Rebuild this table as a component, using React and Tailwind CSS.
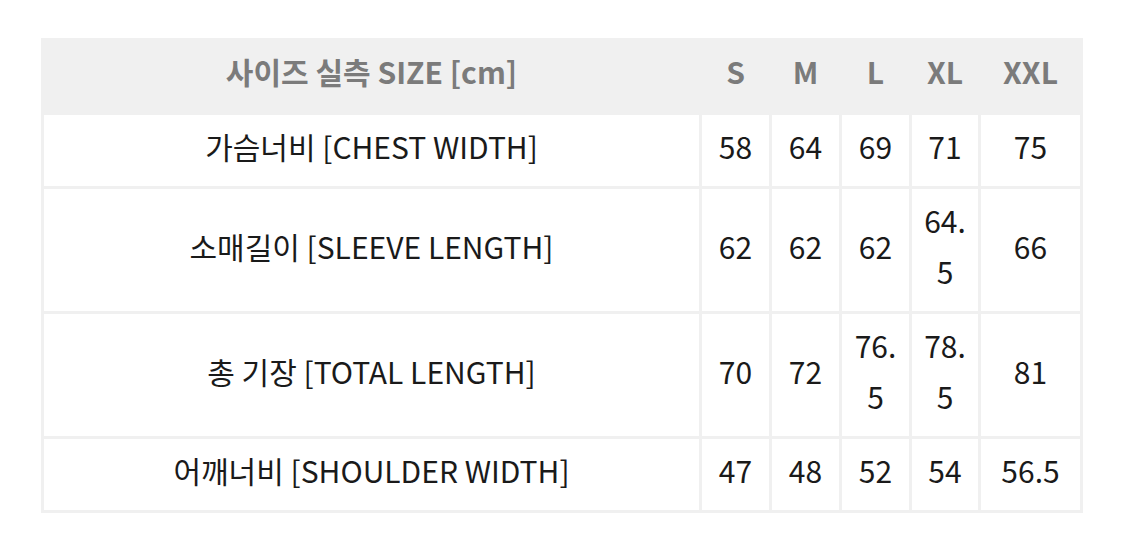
export default function App() {
  const sizes = ['S', 'M', 'L', 'XL', 'XXL']
  const rows = [
    { label: '가슴너비 [CHEST WIDTH]', values: ['58', '64', '69', '71', '75'] },
    { label: '소매길이 [SLEEVE LENGTH]', values: ['62', '62', '62', '64.5', '66'] },
    { label: '총 기장 [TOTAL LENGTH]', values: ['70', '72', '76.5', '78.5', '81'] },
    { label: '어깨너비 [SHOULDER WIDTH]', values: ['47', '48', '52', '54', '56.5'] },
  ]

  return (
    <div
      className="w-[1125px] h-[547px] bg-white pt-[38px] pl-[41px]"
      style={{ fontFamily: '"Noto Sans CJK KR", "Noto Sans", sans-serif' }}
    >
      <table className="table-fixed border-collapse w-[1039px] text-[30px] leading-[51px] text-center">
        <colgroup>
          <col className="w-[658px]" />
          <col className="w-[70px]" />
          <col className="w-[70px]" />
          <col className="w-[70px]" />
          <col className="w-[69px]" />
          <col className="w-[102px]" />
        </colgroup>
        <thead>
          <tr className="bg-[#f0f0f0] text-[#7b7b7b]">
            <th className="h-[74px] pt-0 pb-[10px] px-0 font-semibold border-[3px] border-[#f0f0f0]">사이즈 실측 SIZE [cm]</th>
            {sizes.map((s) => (
              <th key={s} className="pt-0 pb-[10px] px-0 font-semibold border-[3px] border-[#f0f0f0]">{s}</th>
            ))}
          </tr>
        </thead>
        <tbody className="text-[#1a1a1a]">
          {rows.map((row) => (
            <tr key={row.label}>
              <td className="pt-[6px] pb-[14px] px-2 border-[3px] border-[#f0f0f0]">{row.label}</td>
              {row.values.map((v, i) => (
                <td key={i} className="pt-[6px] pb-[14px] px-[10px] break-words border-[3px] border-[#f0f0f0]">{v}</td>
              ))}
            </tr>
          ))}
        </tbody>
      </table>
    </div>
  )
}
